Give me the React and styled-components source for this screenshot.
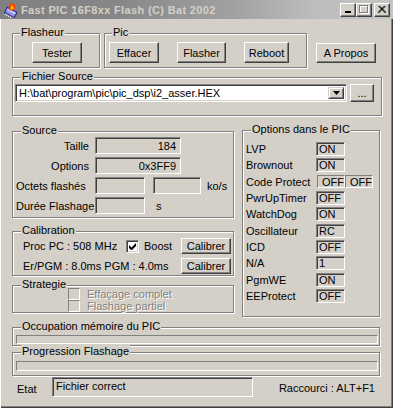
import React from 'react';
import styled, { createGlobalStyle } from 'styled-components';

const Global = createGlobalStyle`
  html, body { margin: 0; padding: 0; background: #d4d0c8; }
  body { font-family: "Liberation Sans", Arial, sans-serif; font-size: 11px; color: #000; }
  * { box-sizing: border-box; }
`;

const FONT = `"Liberation Sans", Arial, sans-serif`;

const Window = styled.div`
  width: 393px;
  height: 408px;
  background: #d4d0c8;
  display: flex;
  flex-direction: column;
  overflow: hidden;
  box-shadow: inset 1px 0 0 #ffffff, inset -1px -1px 0 #404040, inset -2px -2px 0 #808080;
`;

const TitleBar = styled.div`
  height: 19px;
  flex: none;
  display: flex;
  align-items: center;
  padding: 0 3px 0 3px;
  background: linear-gradient(90deg, #808080 0%, #878787 30%, #a2a2a2 60%, #bdbdbd 80%, #c4c4c4 100%);
`;

const TitleText = styled.span`
  flex: 1;
  margin-left: 2px;
  font: bold 11px ${FONT};
  letter-spacing: 0.35px;
  color: #d4d0c8;
  white-space: nowrap;
`;

const CaptionButton = styled.div`
  width: 16px;
  height: 14px;
  margin-left: ${p => (p.$gap ? '2px' : '0')};
  background: #d4d0c8;
  border: 1px solid;
  border-color: #ffffff #404040 #404040 #ffffff;
  box-shadow: inset -1px -1px 0 #808080;
  display: flex;
  align-items: center;
  justify-content: center;
`;

const Body = styled.div`
  flex: 1;
  display: flex;
  flex-direction: column;
  padding-left: 12px;
`;

const TopRow = styled.div`
  display: flex;
  align-items: flex-start;
  margin-top: 14px;
`;

const Group = styled.div`
  position: relative;
  flex: none;
  width: ${p => p.$w}px;
  height: ${p => p.$h}px;
  margin-top: ${p => p.$mt || 0}px;
  margin-left: ${p => p.$ml || 0}px;
  border: 1px solid #808080;
  box-shadow: inset 1px 1px 0 #ffffff, 1px 1px 0 #ffffff;
`;

const GroupLabel = styled.span`
  position: absolute;
  top: -8px;
  left: ${p => p.$left ?? 8}px;
  padding: 0 1px;
  line-height: 13px;
  background: #d4d0c8;
  white-space: nowrap;
`;

const Button = styled.button`
  flex: none;
  width: ${p => p.$w}px;
  height: ${p => p.$h || 21}px;
  margin-top: ${p => p.$mt || 0}px;
  margin-left: ${p => p.$ml || 0}px;
  padding: 0;
  font: 11px ${FONT};
  color: #000;
  background: #d4d0c8;
  border: 1px solid;
  border-color: #ffffff #404040 #404040 #ffffff;
  box-shadow: inset -1px -1px 0 #808080;
  display: flex;
  align-items: center;
  justify-content: center;
  ${p => p.$auto && 'margin-left: auto;'}
`;

const FlasheurBody = styled.div`
  padding: 8px 0 0 19px;
`;

const PicBody = styled.div`
  display: flex;
  gap: 18px;
  padding: 8px 0 0 4px;
`;

const FileBody = styled.div`
  display: flex;
  gap: 3px;
  padding: 6px 0 0 2px;
`;

const Combo = styled.div`
  width: 332px;
  height: 18px;
  display: flex;
  padding: 2px;
  background: #ffffff;
  border: 1px solid;
  border-color: #808080 #ffffff #ffffff #808080;
  box-shadow: inset 1px 1px 0 #404040, inset -1px -1px 0 #d4d0c8;
`;

const ComboText = styled.span`
  flex: 1;
  padding-left: 1px;
  line-height: 13px;
  white-space: nowrap;
`;

const ComboArrow = styled.div`
  width: 16px;
  height: 100%;
  background: #d4d0c8;
  border: 1px solid;
  border-color: #d4d0c8 #404040 #404040 #d4d0c8;
  box-shadow: inset 1px 1px 0 #ffffff, inset -1px -1px 0 #808080;
  display: flex;
  align-items: center;
  justify-content: center;
`;

const Middle = styled.div`
  display: flex;
  align-items: flex-start;
  margin-top: 14px;
`;

const LeftCol = styled.div`
  display: flex;
  flex-direction: column;
  width: 222px;
  margin-top: 1px;
`;

const SourceBody = styled.div`
  display: flex;
  flex-direction: column;
  gap: 3px;
  padding: 5px 0 0 3px;
`;

const FormRow = styled.div`
  display: flex;
  align-items: center;
  height: 17px;
`;

const RowLabel = styled.span`
  width: 76px;
  flex: none;
  text-align: ${p => p.$align || 'left'};
  padding-right: ${p => (p.$align === 'right' ? 3 : 0)}px;
  white-space: nowrap;
`;

const Field = styled.div`
  flex: none;
  width: ${p => p.$w}px;
  height: 17px;
  margin-left: ${p => p.$ml ?? 3}px;
  padding: 2px 4px 0 2px;
  text-align: right;
  line-height: 13px;
  background: #d4d0c8;
  border: 1px solid;
  border-color: #808080 #ffffff #ffffff #808080;
  box-shadow: inset 1px 1px 0 #404040;
`;

const Unit = styled.span`
  margin-left: ${p => p.$ml}px;
`;

const CalBody = styled.div`
  display: flex;
  flex-direction: column;
  gap: 4px;
  padding: 6px 2px 0 10px;
`;

const CalRow = styled.div`
  display: flex;
  align-items: center;
  height: 16px;
`;

const CalText = styled.span`
  width: ${p => (p.$w ? `${p.$w}px` : 'auto')};
  flex: none;
  white-space: nowrap;
`;

const CheckBox = styled.div`
  flex: none;
  width: ${p => p.$size}px;
  height: ${p => p.$size}px;
  background: ${p => (p.$disabled ? '#d4d0c8' : '#ffffff')};
  border: 1px solid;
  border-color: #808080 #ffffff #ffffff #808080;
  box-shadow: ${p => (p.$disabled ? 'none' : 'inset 1px 1px 0 #404040, inset -1px -1px 0 #d4d0c8')};
  display: flex;
  align-items: center;
  justify-content: center;
`;

const CheckLabel = styled.span`
  margin-left: ${p => p.$ml}px;
  white-space: nowrap;
  color: ${p => (p.$disabled ? '#808080' : '#000')};
  text-shadow: ${p => (p.$disabled ? '1px 1px 0 #ffffff' : 'none')};
`;

const StratBody = styled.div`
  display: flex;
  flex-direction: column;
  padding: 2px 0 0 55px;
`;

const StratRow = styled.div`
  display: flex;
  align-items: center;
  height: 12px;
`;

const OptBody = styled.div`
  display: flex;
  flex-direction: column;
  padding: 10px 0 0 3px;
`;

const OptRow = styled.div`
  display: flex;
  align-items: center;
  height: 16.33px;
`;

const OptLabel = styled.span`
  width: 70px;
  flex: none;
  white-space: nowrap;
`;

const OptField = styled.div`
  flex: none;
  width: ${p => (p.$thin ? 28 : 29)}px;
  height: ${p => (p.$thin ? 13 : 14)}px;
  margin-left: ${p => p.$ml || 0}px;
  padding-left: ${p => (p.$thin ? 4 : 2)}px;
  line-height: 12px;
  background: #d4d0c8;
  border: 1px solid;
  border-color: #808080 #ffffff #ffffff #808080;
  box-shadow: ${p => (p.$thin ? 'none' : 'inset 1px 1px 0 #404040')};
  white-space: nowrap;
`;

const BarBody = styled.div`
  padding: ${p => p.$pt}px 0 0 3px;
`;

const Bar = styled.div`
  width: 362px;
  height: ${p => p.$h}px;
  border: 1px solid;
  border-color: #808080 #ffffff #ffffff #808080;
`;

const StatusRow = styled.div`
  display: flex;
  align-items: center;
  height: 20px;
  margin-top: 1px;
`;

const StatusLabel = styled.span`
  width: 40px;
  padding: 3px 0 0 5px;
`;

const StatusField = styled.div`
  width: 201px;
  height: 20px;
  padding: 2px 0 0 3px;
  line-height: 13px;
  background: #d4d0c8;
  border: 1px solid;
  border-color: #808080 #ffffff #ffffff #808080;
  box-shadow: inset 1px 1px 0 #404040;
`;

const Shortcut = styled.span`
  margin-left: auto;
  margin-right: 18px;
  padding-top: 1px;
  white-space: nowrap;
`;

const AppIcon = () => (
  <svg width="16" height="16" viewBox="0 0 16 16">
    <g transform="rotate(28 8 10)">
      <rect x="2.5" y="7.5" width="11" height="6" fill="#8c8cf0" stroke="#2a2a7a" />
      <rect x="3.5" y="8.5" width="9" height="2" fill="#c8c8ff" />
      <path d="M4 14v1.5M6 14v1.5M8 14v1.5M10 14v1.5M12 14v1.5" stroke="#ffffff" strokeWidth="1" />
    </g>
    <path d="M6 8 C5 5 7 3 8 1 C9 3 10 2 10 0.5 C12 2 13 4 12 7 C11 8 8 9 6 8Z" fill="#ff4000" />
    <path d="M7.5 7.5 C7 5.5 8.5 4.5 9 3 C10 4.5 11 5 10.5 7 Z" fill="#ffc000" />
  </svg>
);

const MinIcon = () => (
  <svg width="8" height="7" viewBox="0 0 8 7">
    <rect x="1" y="5" width="6" height="2" fill="#000" />
  </svg>
);

const MaxIcon = () => (
  <svg width="10" height="9" viewBox="0 0 10 9">
    <rect x="1.5" y="1.5" width="8" height="7" fill="none" stroke="#ffffff" />
    <rect x="0.5" y="0.5" width="8" height="7" fill="none" stroke="#808080" />
    <rect x="0.5" y="1.5" width="8" height="0" stroke="#808080" />
  </svg>
);

const CloseIcon = () => (
  <svg width="8" height="7" viewBox="0 0 8 7">
    <path d="M0.5 0 L7.5 7 M1.5 0 L8.5 7 M7.5 0 L0.5 7 M6.5 0 L-0.5 7" stroke="#000" strokeWidth="1" />
  </svg>
);

const DownArrow = () => (
  <svg width="7" height="4" viewBox="0 0 7 4">
    <path d="M0 0H7L3.5 4Z" fill="#000" />
  </svg>
);

const CheckMark = () => (
  <svg width="7" height="7" viewBox="0 0 7 7">
    <path d="M0 2v3l2 2h1l4-4V0L2.5 4.5Z" fill="#000" />
  </svg>
);

const options = [
  { label: 'LVP', values: ['ON'] },
  { label: 'Brownout', values: ['ON'] },
  { label: 'Code Protect', values: ['OFF', 'OFF'], thin: true },
  { label: 'PwrUpTimer', values: ['OFF'] },
  { label: 'WatchDog', values: ['ON'] },
  { label: 'Oscillateur', values: ['RC'] },
  { label: 'ICD', values: ['OFF'] },
  { label: 'N/A', values: ['1'] },
  { label: 'PgmWE', values: ['ON'] },
  { label: 'EEProtect', values: ['OFF'] },
];

export default function App() {
  return (
    <>
      <Global />
      <Window>
        <TitleBar>
          <AppIcon />
          <TitleText>Fast PIC 16F8xx Flash (C) Bat 2002</TitleText>
          <CaptionButton><MinIcon /></CaptionButton>
          <CaptionButton><MaxIcon /></CaptionButton>
          <CaptionButton $gap><CloseIcon /></CaptionButton>
        </TitleBar>
        <Body>
          <TopRow>
            <Group $w={88} $h={35}>
              <GroupLabel $left={7}>Flasheur</GroupLabel>
              <FlasheurBody>
                <Button $w={50}>Tester</Button>
              </FlasheurBody>
            </Group>
            <Group $w={203} $h={35} $ml={4}>
              <GroupLabel $left={7}>Pic</GroupLabel>
              <PicBody>
                <Button $w={50}>Effacer</Button>
                <Button $w={49}>Flasher</Button>
                <Button $w={45}>Reboot</Button>
              </PicBody>
            </Group>
            <Button $w={60} $h={20} $mt={10} $ml={9}>A Propos</Button>
          </TopRow>

          <Group $w={370} $h={39} $mt={9}>
            <GroupLabel>Fichier Source</GroupLabel>
            <FileBody>
              <Combo>
                <ComboText>H:\bat\program\pic\pic_dsp\i2_asser.HEX</ComboText>
                <ComboArrow><DownArrow /></ComboArrow>
              </Combo>
              <Button $w={24} $h={18}>...</Button>
            </FileBody>
          </Group>

          <Middle>
            <LeftCol>
              <Group $w={222} $h={87}>
                <GroupLabel>Source</GroupLabel>
                <SourceBody>
                  <FormRow>
                    <RowLabel $align="right">Taille</RowLabel>
                    <Field $w={86}>184</Field>
                  </FormRow>
                  <FormRow>
                    <RowLabel $align="right">Options</RowLabel>
                    <Field $w={86}>0x3FF9</Field>
                  </FormRow>
                  <FormRow>
                    <RowLabel>Octets flashés</RowLabel>
                    <Field $w={50} />
                    <Field $w={48} $ml={8} />
                    <Unit $ml={6}>ko/s</Unit>
                  </FormRow>
                  <FormRow>
                    <RowLabel>Durée Flashage</RowLabel>
                    <Field $w={50} />
                    <Unit $ml={11}>s</Unit>
                  </FormRow>
                </SourceBody>
              </Group>

              <Group $w={222} $h={45} $mt={13}>
                <GroupLabel>Calibration</GroupLabel>
                <CalBody>
                  <CalRow>
                    <CalText $w={103}>Proc PC : 508 MHz</CalText>
                    <CheckBox $size={13}><CheckMark /></CheckBox>
                    <CheckLabel $ml={5}>Boost</CheckLabel>
                    <Button $w={50} $h={16} $auto>Calibrer</Button>
                  </CalRow>
                  <CalRow>
                    <CalText>Er/PGM : 8.0ms PGM : 4.0ms</CalText>
                    <Button $w={50} $h={16} $auto>Calibrer</Button>
                  </CalRow>
                </CalBody>
              </Group>

              <Group $w={222} $h={28} $mt={9}>
                <GroupLabel>Strategie</GroupLabel>
                <StratBody>
                  <StratRow>
                    <CheckBox $size={12} $disabled />
                    <CheckLabel $ml={7} $disabled>Effaçage complet</CheckLabel>
                  </StratRow>
                  <StratRow>
                    <CheckBox $size={12} $disabled />
                    <CheckLabel $ml={7} $disabled>Flashage partiel</CheckLabel>
                  </StratRow>
                </StratBody>
              </Group>
            </LeftCol>

            <Group $w={138} $h={187} $ml={8}>
              <GroupLabel>Options dans le PIC</GroupLabel>
              <OptBody>
                {options.map(o => (
                  <OptRow key={o.label}>
                    <OptLabel>{o.label}</OptLabel>
                    {o.values.map((v, i) => (
                      <OptField key={i} $thin={o.thin} $ml={o.thin && i === 0 ? 1 : 0}>{v}</OptField>
                    ))}
                  </OptRow>
                ))}
              </OptBody>
            </Group>
          </Middle>

          <Group $w={368} $h={19} $mt={10}>
            <GroupLabel>Occupation mémoire du PIC</GroupLabel>
            <BarBody $pt={7}><Bar $h={9} /></BarBody>
          </Group>

          <Group $w={368} $h={24} $mt={6}>
            <GroupLabel>Progression Flashage</GroupLabel>
            <BarBody $pt={8}><Bar $h={10} /></BarBody>
          </Group>

          <StatusRow>
            <StatusLabel>Etat</StatusLabel>
            <StatusField>Fichier correct</StatusField>
            <Shortcut>Raccourci : ALT+F1</Shortcut>
          </StatusRow>
        </Body>
      </Window>
    </>
  );
}
